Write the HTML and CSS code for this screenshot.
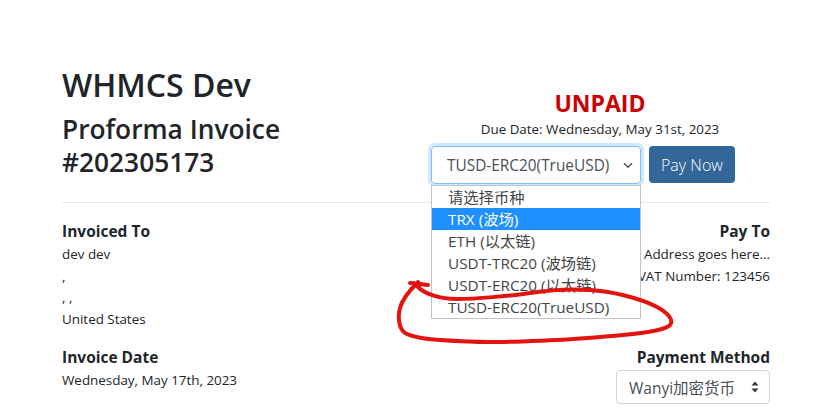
FILE: index.html
```html
<!DOCTYPE html>
<html lang="en">
<head>
  <meta charset="UTF-8">
  <title>WHMCS Dev - Proforma Invoice #202305173</title>
  <link rel="stylesheet" href="styles.css">
</head>
<body>
  <div class="invoice">
    <div class="top">
      <div class="brand">
        <h2 class="company">WHMCS Dev</h2>
        <h3 class="number">Proforma Invoice<br>#202305173</h3>
      </div>
      <div class="status">
        <div class="unpaid">UNPAID</div>
        <div class="due">Due Date: Wednesday, May 31st, 2023</div>
        <div class="pay-form">
          <div class="select-wrap">
            <div class="select focused">
              <span>TUSD-ERC20(TrueUSD)</span>
              <svg class="chevron" width="10" height="7" viewBox="0 0 10 7"><path d="M1 1.2l4 4 4-4" fill="none" stroke="#555" stroke-width="1.6"/></svg>
            </div>
            <ul class="dropdown">
              <li>请选择币种</li>
              <li class="hover">TRX (波场)</li>
              <li>ETH (以太链)</li>
              <li>USDT-TRC20 (波场链)</li>
              <li>USDT-ERC20 (以太链)</li>
              <li>TUSD-ERC20(TrueUSD)</li>
            </ul>
          </div>
          <button class="btn-pay">Pay Now</button>
        </div>
      </div>
    </div>

    <hr class="divider">

    <div class="row">
      <div class="col">
        <div class="label">Invoiced To</div>
        <div class="lines">
          dev dev<br>
          ,<br>
          , ,<br>
          United States
        </div>
      </div>
      <div class="col right">
        <div class="label">Pay To</div>
        <div class="lines">
          Address goes here...<br>
          VAT Number: 123456
        </div>
      </div>
    </div>

    <div class="row second">
      <div class="col">
        <div class="label">Invoice Date</div>
        <div class="lines">Wednesday, May 17th, 2023</div>
      </div>
      <div class="col right">
        <div class="label">Payment Method</div>
        <div class="method">
          <span>Wanyi加密货币</span>
          <svg width="8" height="12" viewBox="0 0 8 12"><path d="M4 0.5L7.5 4.5H0.5Z M4 11.5L0.5 7.5H7.5Z" fill="#343a40"/></svg>
        </div>
      </div>
    </div>
  </div>

  <!-- hand drawn red circle over the screenshot -->
  <svg class="scribble" width="830" height="420" viewBox="0 0 830 420">
    <path d="M428 285 C420 284 414 283 410 283 M418 287 C425 294 440 299 457 299 C475 299 510 296 530 293 C550 290 575 289 590 290 C610 291 640 298 657 307 C668 313 674 320 670 325 C665 330 645 333 623 335 C600 337 580 339 557 340 C530 341 510 342 490 342 C470 342 455 341 440 340 C425 339 412 337 405 333 C398 328 398 315 400 308 C402 300 410 290 418 282"
      fill="none" stroke="#e3140f" stroke-width="4" stroke-linecap="round" stroke-linejoin="round"/>
  </svg>
</body>
</html>
```

FILE: styles.css
```css
body {
  margin: 0;
  padding-left: 2px;
  background: #fff;
  color: #212529;
  font-family: "Open Sans", "Noto Sans CJK SC", sans-serif;
}
.invoice {
  width: 708px;
  margin: 0 auto;
  padding-top: 66px;
}
.top {
  display: flex;
}
.brand {
  width: 368px;
}
.company {
  margin: 0;
  font-size: 32px;
  font-weight: 600;
  line-height: 38px;
}
.number {
  margin: 9px 0 0;
  font-size: 26.3px;
  font-weight: 600;
  line-height: 32.5px;
}
.status {
  flex: 1;
  text-align: center;
  padding-top: 23px;
}
.unpaid {
  color: #cc0000;
  font-size: 23px;
  font-weight: 700;
  line-height: 28px;
}
.due {
  font-size: 13.4px;
  line-height: 18px;
  margin-top: 3px;
}
.pay-form {
  display: flex;
  gap: 8px;
  margin-top: 8px;
  padding-left: 1px;
}
.select-wrap {
  position: relative;
}
.select {
  box-sizing: border-box;
  width: 210px;
  height: 38px;
  border: 1px solid #80bdff;
  border-radius: 4px;
  box-shadow: 0 0 0 3px rgba(0, 123, 255, 0.18);
  display: flex;
  align-items: center;
  justify-content: space-between;
  padding: 0 7px 0 15px;
  font-size: 15.4px;
  color: #495057;
}
.dropdown {
  position: absolute;
  left: 0;
  top: 39px;
  width: 210px;
  box-sizing: border-box;
  margin: 0;
  padding: 0;
  list-style: none;
  background: #fff;
  border: 1px solid #c4c4c4;
  text-align: left;
  z-index: 2;
}
.dropdown li {
  height: 22px;
  line-height: 22px;
  padding-left: 16px;
  font-size: 15.3px;
  color: #444;
}
.dropdown li.hover {
  background: #1e90ff;
  color: #fff;
}
.btn-pay {
  height: 37px;
  padding: 0 12px;
  border: none;
  border-radius: 4px;
  background: #336699;
  color: #fff;
  font-family: inherit;
  font-size: 16px;
  font-weight: 300;
}
.divider {
  border: 0;
  border-top: 1px solid #e6e6e6;
  margin: 18px 0 0;
}
.row {
  display: flex;
  justify-content: space-between;
  padding-top: 15px;
}
.row.second {
  padding-top: 14px;
}
.col.right {
  text-align: right;
}
.label {
  font-size: 15.5px;
  font-weight: 700;
  line-height: 26px;
}
.lines {
  font-size: 13.4px;
  line-height: 21.5px;
}
.method {
  box-sizing: border-box;
  width: 154px;
  height: 34px;
  margin-top: 0;
  margin-left: auto;
  border: 1px solid #ced4da;
  border-radius: 4px;
  display: flex;
  align-items: center;
  justify-content: space-between;
  padding: 0 10px 0 12px;
  font-size: 15.5px;
  color: #495057;
}
.scribble {
  position: absolute;
  left: 0;
  top: 0;
  pointer-events: none;
  z-index: 3;
}
```
